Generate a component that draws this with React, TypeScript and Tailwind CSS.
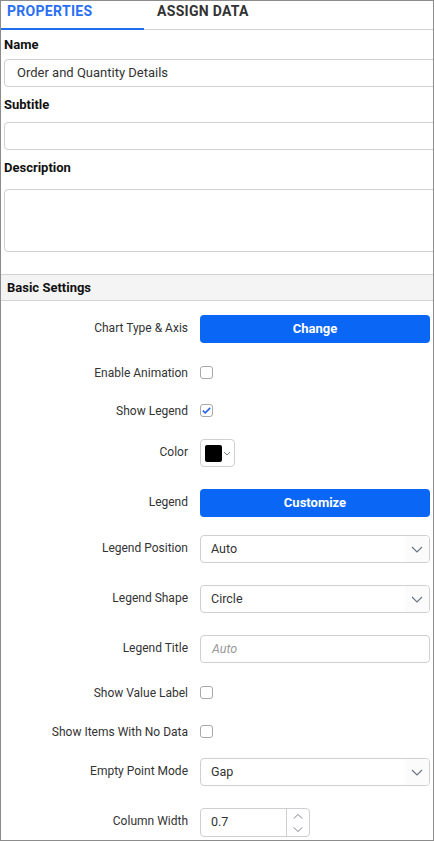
import type { ReactNode } from "react";

const font = { fontFamily: "Roboto, 'Liberation Sans', sans-serif" };

function Chevron({ className = "" }: { className?: string }) {
  return (
    <svg width="12" height="7" viewBox="0 0 12 7" fill="none" className={className}>
      <path d="M1 1l5 5 5-5" stroke="#6b7280" strokeWidth="1.1" />
    </svg>
  );
}

function Row({
  label,
  children,
  className = "",
  tall = true,
}: {
  label: string;
  children: ReactNode;
  className?: string;
  tall?: boolean;
}) {
  return (
    <div className={`flex items-center ${className}`}>
      <div className={`w-[187px] text-right text-[12px] leading-[14px] text-[#333] ${tall ? "pb-[3px]" : "pt-[1px]"}`}>
        {label}
      </div>
      <div className="ml-[12px] flex items-center">{children}</div>
    </div>
  );
}

function Check({ checked = false }: { checked?: boolean }) {
  return (
    <div className="w-[13px] h-[13px] rounded-[3px] border border-[#a8a8a8] bg-white flex items-center justify-center">
      {checked && (
        <svg width="9" height="7" viewBox="0 0 9 7" fill="none">
          <path d="M0.8 3.6l2.4 2.3L8.2 0.9" stroke="#2563eb" strokeWidth="1.5" />
        </svg>
      )}
    </div>
  );
}

function Select({ value }: { value: string }) {
  return (
    <div className="w-[230px] h-[28px] rounded-[4px] border border-[#cfcfcf] flex items-center overflow-hidden">
      <span className="pl-[10px] flex-1 text-[12.5px] text-[#333]">{value}</span>
      <span className="h-full w-[24px] bg-[#fbfbfb] flex items-center justify-center">
        <Chevron />
      </span>
    </div>
  );
}

function BlueButton({ text }: { text: string }) {
  return (
    <div className="w-[230px] h-[28px] rounded-[4px] bg-[#0a66f5] flex items-center justify-center text-white font-bold text-[13px]">
      {text}
    </div>
  );
}

export default function App() {
  return (
    <div style={font} className="w-[434px] h-[841px] bg-white border border-[#8c8c8c] overflow-hidden">
      <div className="h-[29px] flex border-b border-[#d0d0d0]">
        <div className="w-[143px] -mb-px border-b-2 border-[#1f6ff0] pl-[6px] pt-[2px] text-[14px] leading-[16px] font-bold tracking-[0.3px] text-[#2a6ff2]">
          PROPERTIES
        </div>
        <div className="pl-[13px] pt-[2px] text-[14px] leading-[16px] font-bold tracking-[0.3px] text-[#333]">
          ASSIGN DATA
        </div>
      </div>

      <div className="pl-[3px]">
        <div className="mt-[7px] text-[13px] leading-[16px] font-bold text-[#111]">Name</div>
        <div className="mt-[6px] w-[440px] h-[28px] rounded-[4px] border border-[#d0d0d0] flex items-center pl-[12px] text-[13px] text-[#333]">
          Order and Quantity Details
        </div>
        <div className="mt-[10px] text-[13px] leading-[16px] font-bold text-[#111]">Subtitle</div>
        <div className="mt-[9px] w-[440px] h-[28px] rounded-[4px] border border-[#d0d0d0]" />
        <div className="mt-[10px] text-[13px] leading-[16px] font-bold text-[#111]">Description</div>
        <div className="mt-[13px] w-[440px] h-[63px] rounded-[4px] border border-[#d0d0d0]" />
      </div>

      <div className="mt-[22px] h-[27px] bg-[#f4f4f4] border-y border-[#d4d4d4] flex items-center pl-[6px] text-[13px] font-bold text-[#111]">
        Basic Settings
      </div>

      <div className="pt-[14px]">
        <Row label="Chart Type & Axis" className="h-[28px]">
          <BlueButton text="Change" />
        </Row>
        <Row label="Enable Animation" className="mt-[15px] h-[28px]" tall={false}>
          <Check />
        </Row>
        <Row label="Show Legend" className="mt-[10px] h-[28px]" tall={false}>
          <Check checked />
        </Row>
        <Row label="Color" className="mt-[15px] h-[28px]">
          <div className="w-[35px] h-[28px] rounded-[4px] border border-[#cfcfcf] flex items-center pl-[4px]">
            <div className="w-[17px] h-[17px] rounded-[2px] bg-black" />
            <svg width="8" height="5" viewBox="0 0 8 5" fill="none" className="ml-[1px]">
              <path d="M1 1l3 3 3-3" stroke="#6b7280" strokeWidth="0.9" />
            </svg>
          </div>
        </Row>
        <Row label="Legend" className="mt-[22px] h-[28px]">
          <BlueButton text="Customize" />
        </Row>
        <Row label="Legend Position" className="mt-[18px] h-[28px]">
          <Select value="Auto" />
        </Row>
        <Row label="Legend Shape" className="mt-[22px] h-[28px]">
          <Select value="Circle" />
        </Row>
        <Row label="Legend Title" className="mt-[22px] h-[28px]">
          <div className="w-[230px] h-[28px] rounded-[4px] border border-[#cfcfcf] flex items-center pl-[11px] text-[12.5px] italic text-[#9a9a9a]">
            Auto
          </div>
        </Row>
        <Row label="Show Value Label" className="mt-[15px] h-[28px]" tall={false}>
          <Check />
        </Row>
        <Row label="Show Items With No Data" className="mt-[11px] h-[28px]" tall={false}>
          <Check />
        </Row>
        <Row label="Empty Point Mode" className="mt-[13px] h-[28px]">
          <Select value="Gap" />
        </Row>
        <Row label="Column Width" className="mt-[22px] h-[29px]">
          <div className="w-[110px] h-[29px] rounded-[4px] border border-[#cfcfcf] flex items-center">
            <span className="flex-1 pl-[10px] text-[12.5px] text-[#333]">0.7</span>
            <span className="h-full w-[23px] border-l border-[#cfcfcf] flex flex-col items-center justify-center gap-[6px]">
              <Chevron className="rotate-180 w-[10px]" />
              <Chevron className="w-[10px]" />
            </span>
          </div>
        </Row>
      </div>
    </div>
  );
}
